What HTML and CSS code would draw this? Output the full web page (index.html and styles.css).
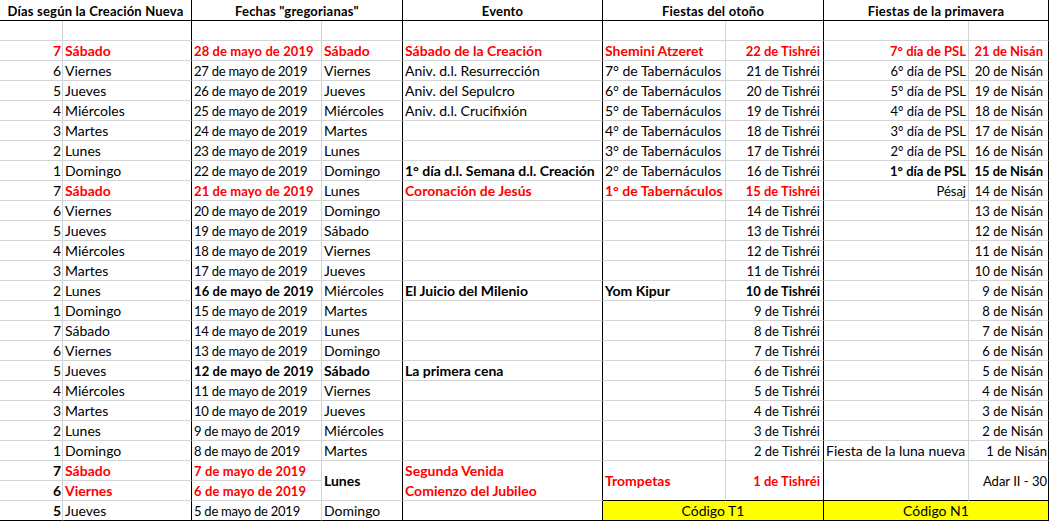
FILE: index.html
```html
<!DOCTYPE html>
<html lang="es">
<head>
<meta charset="utf-8">
<title>Días según la Creación Nueva</title>
<link rel="stylesheet" href="styles.css">
</head>
<body>
<div class="sheet">
  <div class="c hd c2 bk bb">Días según la Creación Nueva</div>
  <div class="c hd c2 bk bb">Fechas "gregorianas"</div>
  <div class="c hd bk bb">Evento</div>
  <div class="c hd c2 bk bb">Fiestas del otoño</div>
  <div class="c hd c2 bk bb">Fiestas de la primavera</div>

  <div class="c"></div><div class="c bk"></div><div class="c"></div><div class="c bk"></div><div class="c bk"></div><div class="c"></div><div class="c bk"></div><div class="c"></div><div class="c bk"></div>

  <div class="c n red b">7</div><div class="c bk red b">Sábado</div><div class="c d red b">28 de mayo de 2019</div><div class="c bk red b">Sábado</div><div class="c bk red b">Sábado de la Creación</div><div class="c red b">Shemini Atzeret</div><div class="c bk t red b">22 de Tishréi</div><div class="c s red b">7° día de PSL</div><div class="c bk ni red b">21 de Nisán</div>

  <div class="c n">6</div><div class="c bk">Viernes</div><div class="c d">27 de mayo de 2019</div><div class="c bk">Viernes</div><div class="c bk">Aniv. d.l. Resurrección</div><div class="c">7° de Tabernáculos</div><div class="c bk t">21 de Tishréi</div><div class="c s">6° día de PSL</div><div class="c bk ni">20 de Nisán</div>

  <div class="c n">5</div><div class="c bk">Jueves</div><div class="c d">26 de mayo de 2019</div><div class="c bk">Jueves</div><div class="c bk">Aniv. del Sepulcro</div><div class="c">6° de Tabernáculos</div><div class="c bk t">20 de Tishréi</div><div class="c s">5° día de PSL</div><div class="c bk ni">19 de Nisán</div>

  <div class="c n">4</div><div class="c bk">Miércoles</div><div class="c d">25 de mayo de 2019</div><div class="c bk">Miércoles</div><div class="c bk">Aniv. d.l. Crucifixión</div><div class="c">5° de Tabernáculos</div><div class="c bk t">19 de Tishréi</div><div class="c s">4° día de PSL</div><div class="c bk ni">18 de Nisán</div>

  <div class="c n">3</div><div class="c bk">Martes</div><div class="c d">24 de mayo de 2019</div><div class="c bk">Martes</div><div class="c bk"></div><div class="c">4° de Tabernáculos</div><div class="c bk t">18 de Tishréi</div><div class="c s">3° día de PSL</div><div class="c bk ni">17 de Nisán</div>

  <div class="c n">2</div><div class="c bk">Lunes</div><div class="c d">23 de mayo de 2019</div><div class="c bk">Lunes</div><div class="c bk"></div><div class="c">3° de Tabernáculos</div><div class="c bk t">17 de Tishréi</div><div class="c s">2° día de PSL</div><div class="c bk ni">16 de Nisán</div>

  <div class="c n">1</div><div class="c bk">Domingo</div><div class="c d">22 de mayo de 2019</div><div class="c bk">Domingo</div><div class="c bk b">1° día d.l. Semana d.l. Creación</div><div class="c">2° de Tabernáculos</div><div class="c bk t">16 de Tishréi</div><div class="c s b">1° día de PSL</div><div class="c bk ni b">15 de Nisán</div>

  <div class="c n">7</div><div class="c bk red b">Sábado</div><div class="c d red b">21 de mayo de 2019</div><div class="c bk">Lunes</div><div class="c bk red b">Coronación de Jesús</div><div class="c red b">1° de Tabernáculos</div><div class="c bk t red b">15 de Tishréi</div><div class="c s">Pésaj</div><div class="c bk ni">14 de Nisán</div>

  <div class="c n">6</div><div class="c bk">Viernes</div><div class="c d">20 de mayo de 2019</div><div class="c bk">Domingo</div><div class="c bk"></div><div class="c"></div><div class="c bk t">14 de Tishréi</div><div class="c s"></div><div class="c bk ni">13 de Nisán</div>

  <div class="c n">5</div><div class="c bk">Jueves</div><div class="c d">19 de mayo de 2019</div><div class="c bk">Sábado</div><div class="c bk"></div><div class="c"></div><div class="c bk t">13 de Tishréi</div><div class="c s"></div><div class="c bk ni">12 de Nisán</div>

  <div class="c n">4</div><div class="c bk">Miércoles</div><div class="c d">18 de mayo de 2019</div><div class="c bk">Viernes</div><div class="c bk"></div><div class="c"></div><div class="c bk t">12 de Tishréi</div><div class="c s"></div><div class="c bk ni">11 de Nisán</div>

  <div class="c n">3</div><div class="c bk">Martes</div><div class="c d">17 de mayo de 2019</div><div class="c bk">Jueves</div><div class="c bk"></div><div class="c"></div><div class="c bk t">11 de Tishréi</div><div class="c s"></div><div class="c bk ni">10 de Nisán</div>

  <div class="c n">2</div><div class="c bk">Lunes</div><div class="c d b">16 de mayo de 2019</div><div class="c bk">Miércoles</div><div class="c bk b">El Juicio del Milenio</div><div class="c b">Yom Kipur</div><div class="c bk t b">10 de Tishréi</div><div class="c s"></div><div class="c bk ni">9 de Nisán</div>

  <div class="c n">1</div><div class="c bk">Domingo</div><div class="c d">15 de mayo de 2019</div><div class="c bk">Martes</div><div class="c bk"></div><div class="c"></div><div class="c bk t">9 de Tishréi</div><div class="c s"></div><div class="c bk ni">8 de Nisán</div>

  <div class="c n">7</div><div class="c bk">Sábado</div><div class="c d">14 de mayo de 2019</div><div class="c bk">Lunes</div><div class="c bk"></div><div class="c"></div><div class="c bk t">8 de Tishréi</div><div class="c s"></div><div class="c bk ni">7 de Nisán</div>

  <div class="c n">6</div><div class="c bk">Viernes</div><div class="c d">13 de mayo de 2019</div><div class="c bk">Domingo</div><div class="c bk"></div><div class="c"></div><div class="c bk t">7 de Tishréi</div><div class="c s"></div><div class="c bk ni">6 de Nisán</div>

  <div class="c n">5</div><div class="c bk">Jueves</div><div class="c d b">12 de mayo de 2019</div><div class="c bk b">Sábado</div><div class="c bk b">La primera cena</div><div class="c"></div><div class="c bk t">6 de Tishréi</div><div class="c s"></div><div class="c bk ni">5 de Nisán</div>

  <div class="c n">4</div><div class="c bk">Miércoles</div><div class="c d">11 de mayo de 2019</div><div class="c bk">Viernes</div><div class="c bk"></div><div class="c"></div><div class="c bk t">5 de Tishréi</div><div class="c s"></div><div class="c bk ni">4 de Nisán</div>

  <div class="c n">3</div><div class="c bk">Martes</div><div class="c d">10 de mayo de 2019</div><div class="c bk">Jueves</div><div class="c bk"></div><div class="c"></div><div class="c bk t">4 de Tishréi</div><div class="c s"></div><div class="c bk ni">3 de Nisán</div>

  <div class="c n">2</div><div class="c bk">Lunes</div><div class="c d">9 de mayo de 2019</div><div class="c bk">Miércoles</div><div class="c bk"></div><div class="c"></div><div class="c bk t">3 de Tishréi</div><div class="c s"></div><div class="c bk ni">2 de Nisán</div>

  <div class="c n">1</div><div class="c bk">Domingo</div><div class="c d">8 de mayo de 2019</div><div class="c bk">Martes</div><div class="c bk"></div><div class="c"></div><div class="c bk t">2 de Tishréi</div><div class="c">Fiesta de la luna nueva</div><div class="c bk ni tight">1 de Nisán</div>

  <div class="c n b">7</div><div class="c bk red b">Sábado</div><div class="c d red b">7 de mayo de 2019</div><div class="c bk r2 mid b">Lunes</div><div class="c bk r2 red b two">Segunda Venida<br>Comienzo del Jubileo</div><div class="c r2 mid red b bb">Trompetas</div><div class="c bk r2 mid t red b bb">1 de Tishréi</div><div class="c r2 bb"></div><div class="c bk r2 mid ni tight bb">Adar II - 30</div>

  <div class="c n b">6</div><div class="c bk red b">Viernes</div><div class="c d red b">6 de mayo de 2019</div>

  <div class="c n b last">5</div><div class="c bk last">Jueves</div><div class="c d last">5 de mayo de 2019</div><div class="c bk last">Domingo</div><div class="c bk last"></div><div class="c c2 bk last y">Código T1</div><div class="c c2 bk last y">Código N1</div>
</div>
</body>
</html>
```

FILE: styles.css
```css
html, body {
  margin: 0;
  padding: 0;
  background: #ffffff;
}

.sheet {
  display: grid;
  grid-template-columns: 63px 129px 130px 81px 200px 123px 98px 145px 80px;
  grid-template-rows: 21px;
  grid-auto-rows: 20px;
  width: 1049px;
  font-family: Lato, "Open Sans", "Liberation Sans", sans-serif;
  font-size: 14px;
  color: #000000;
}

.c {
  box-sizing: border-box;
  border-right: 1px solid #d4d4d4;
  border-bottom: 1px solid #d4d4d4;
  padding: 1px 2px 0;
  line-height: 18px;
  white-space: nowrap;
  overflow: hidden;
}

.bk { border-right-color: #000000; }
.bb { border-bottom-color: #000000; }
.last { border-bottom-color: #000000; }

.hd {
  font-weight: 700;
  font-size: 13px;
  text-align: center;
  line-height: 19px;
  padding-top: 2px;
  letter-spacing: 0.2px;
}

.c2 { grid-column: span 2; }
.r2 { grid-row: span 2; }

.b { font-weight: 700; }
.red { color: #ff0000; }

.d { font-size: 13px; line-height: 19px; letter-spacing: -0.25px; }
.d.b { letter-spacing: 0.1px; }

.n { text-align: right; padding-right: 1px; }
.t { text-align: right; padding-right: 3px; font-size: 13px; line-height: 19px; }
.s { text-align: right; padding-right: 2px; font-size: 13px; line-height: 19px; }
.ni { text-align: right; padding-right: 5px; font-size: 13px; line-height: 19px; }
.tight { padding-right: 1px; }

.mid { line-height: 38px; }
.two { line-height: 20px; padding-top: 0; }

.y {
  background: #ffff00;
  text-align: center;
}
```
